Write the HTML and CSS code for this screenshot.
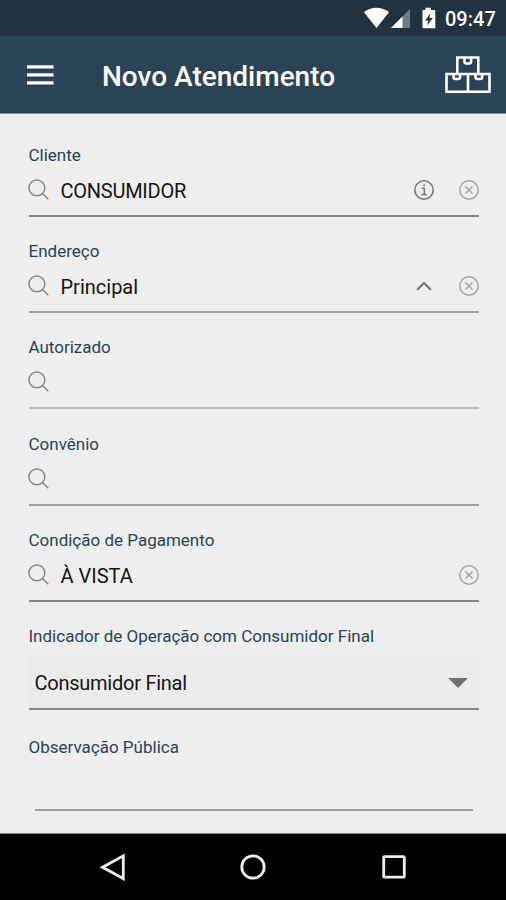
FILE: index.html
```html
<!DOCTYPE html>
<html lang="pt-BR">
<head>
<meta charset="utf-8">
<title>Novo Atendimento</title>
<link rel="stylesheet" href="styles.css">
</head>
<body>
<svg class="defs" aria-hidden="true">
  <symbol id="search" viewBox="0 0 22 22"><circle cx="8.9" cy="8.9" r="7.9"/><path d="M14.5 14.5L20.3 20.2"/></symbol>
  <symbol id="clear" viewBox="0 0 22 22"><circle cx="11" cy="11" r="9.2"/><path d="M7.5 7.5l7 7M14.5 7.5l-7 7"/></symbol>
</svg>
<div class="screen">
  <div class="status">
    <svg class="status-icons" viewBox="0 0 76 24">
      <path fill="#fff" d="M0 6.2C7 .2 18 .2 25 6.2L12.5 22z"/>
      <path fill="#6f7c87" d="M46 3V22H27z"/><path fill="#fff" d="M38.500 10.500V22H27z"/>
      <path fill="#fff" d="M58.500 4h3V1.800h5.400V4h4.400V22.300H58.500z"/>
      <path fill="#213341" d="M66.500 7l-5.300 7.500h3l-1 5 5.600-7.400h-3.400z"/>
    </svg>
    <span class="clock">09:47</span>
  </div>
  <header class="appbar">
    <svg class="menu" viewBox="0 0 27 20"><path d="M0 1.900h26.500M0 9.900h26.500M0 17.900h26.500"/></svg>
    <h1 class="title">Novo Atendimento</h1>
    <svg class="boxes" viewBox="0 0 46 38"><path d="M12.300 17.500V1.500h21v16M1.500 18h43v17.800h-43zM23 18v17.800M19.500 2v3.500q0 2 2 2h2.600q2 0 2-2V2M8.500 18.500V21q0 2 2 2h2.600q2 0 2-2v-2.500M30.500 18.500V21q0 2 2 2h2.600q2 0 2-2v-2.500"/></svg>
  </header>
  <main class="form">
    <section class="field">
      <div class="label">Cliente</div>
      <div class="row"><svg class="icon search"><use href="#search"/></svg><span class="value tight">CONSUMIDOR</span>
        <svg class="icon info" viewBox="0 0 22 22"><circle cx="11" cy="11" r="9.200"/><path d="M8.800 9.200h2.500v6M8.500 15.500h5.200M10.300 6.200h1.800"/></svg>
        <svg class="icon clear"><use href="#clear"/></svg></div>
    </section>
    <section class="field mid">
      <div class="label">Endereço</div>
      <div class="row"><svg class="icon search"><use href="#search"/></svg><span class="value">Principal</span>
        <svg class="icon chevron" viewBox="0 0 22 22"><path d="M4 15l7-7 7 7"/></svg>
        <svg class="icon clear"><use href="#clear"/></svg></div>
    </section>
    <section class="field light">
      <div class="label">Autorizado</div>
      <div class="row"><svg class="icon search"><use href="#search"/></svg></div>
    </section>
    <section class="field mid">
      <div class="label">Convênio</div>
      <div class="row"><svg class="icon search"><use href="#search"/></svg></div>
    </section>
    <section class="field">
      <div class="label">Condição de Pagamento</div>
      <div class="row"><svg class="icon search"><use href="#search"/></svg><span class="value">À VISTA</span>
        <svg class="icon clear"><use href="#clear"/></svg></div>
    </section>
    <section class="select-field">
      <div class="label">Indicador de Operação com Consumidor Final</div>
      <div class="select"><span class="selected tight">Consumidor Final</span><svg class="arrow" viewBox="0 0 20 10"><path d="M0 0h20L10 10z"/></svg></div>
    </section>
    <section class="note">
      <div class="label">Observação Pública</div>
      <div class="note-input"></div>
    </section>
  </main>
  <nav class="navbar">
    <svg viewBox="0 0 28 28"><path d="M24.300 2.800v22.800L3.500 14.200z"/></svg>
    <svg viewBox="0 0 28 28"><circle cx="14" cy="14" r="11.200"/></svg>
    <svg viewBox="0 0 28 28"><rect x="3.700" y="3.600" width="20.600" height="20.600" rx=".8"/></svg>
  </nav>
</div>
</body>
</html>
```
FILE: styles.css
```css
* { box-sizing: border-box; }
body { margin: 0; font-family: Roboto, "Liberation Sans", sans-serif; background: #eee; }
svg { flex: none; display: block; }
.defs { position: absolute; width: 0; height: 0; }
.screen { width: 506px; height: 900px; display: flex; flex-direction: column; overflow: hidden; }
.status { height: 36px; background: #213341; display: flex; align-items: center; justify-content: flex-end; padding-right: 11px; color: #fff; }
.status-icons { width: 76px; height: 24px; margin-right: 5px; }
.clock { font-size: 20px; font-weight: 500; line-height: 24px; width: 50px; white-space: nowrap; padding-top: 2px; }
.appbar { height: 78px; background: #2a4455; border-bottom: 1px solid #83919a; display: flex; align-items: center; padding: 0 15px 0 27px; color: #fff; }
.menu { width: 27px; height: 20px; fill: none; stroke: #fff; stroke-width: 3.4; }
.title { flex: 1; margin: 4px 0 0 48px; font-size: 28px; font-weight: 500; line-height: 34px; white-space: nowrap; }
.boxes { width: 46px; height: 38px; fill: none; stroke: #fff; stroke-width: 2.6; }
.form { flex: 1; padding: 6.500px 27.500px 0 28.500px; background: #eee; border-bottom: 1px solid #858585; }
.field { height: 96.300px; padding-top: 23.200px; border-bottom: 2px solid #858585; }
.field.mid { border-color: #a0a0a0; }
.field.light { border-color: #bcbcbc; }
.label { height: 22px; font-size: 17px; line-height: 22px; color: #2a4455; white-space: nowrap; }
.row { height: 48px; display: flex; align-items: center; }
.icon { width: 22px; height: 22px; fill: none; stroke: #858585; stroke-width: 1.500; }
.search { margin-left: -1px; stroke: #888; }
.value { flex: 1; margin-left: 11px; font-size: 20px; line-height: 26px; padding-top: 2px; color: #151515; white-space: nowrap; }
.tight { letter-spacing: -.25px; }
.clear { margin-left: 23px; margin-right: -1px; stroke: #a5a5a5; }
.info { stroke: #777; }
.chevron { stroke: #777; stroke-width: 2; }
.select-field { padding-top: 23.500px; }
.select { margin-top: 10px; height: 53px; background: #ebebeb; border-bottom: 2px solid #858585; display: flex; align-items: center; justify-content: space-between; padding: 0 11px 0 6px; }
.selected { font-size: 20px; color: #151515; }
.arrow { width: 20px; height: 10px; fill: #737373; }
.note { padding-top: 25.500px; }
.note-input { margin: 0 6px; height: 53px; border-bottom: 2px solid #a0a0a0; }
.navbar { height: 66px; padding-bottom: 0; background: #000; display: flex; justify-content: center; align-items: center; gap: 112.500px; }
.navbar svg { width: 28px; height: 28px; fill: none; stroke: #eee; stroke-width: 2.800; }
```
